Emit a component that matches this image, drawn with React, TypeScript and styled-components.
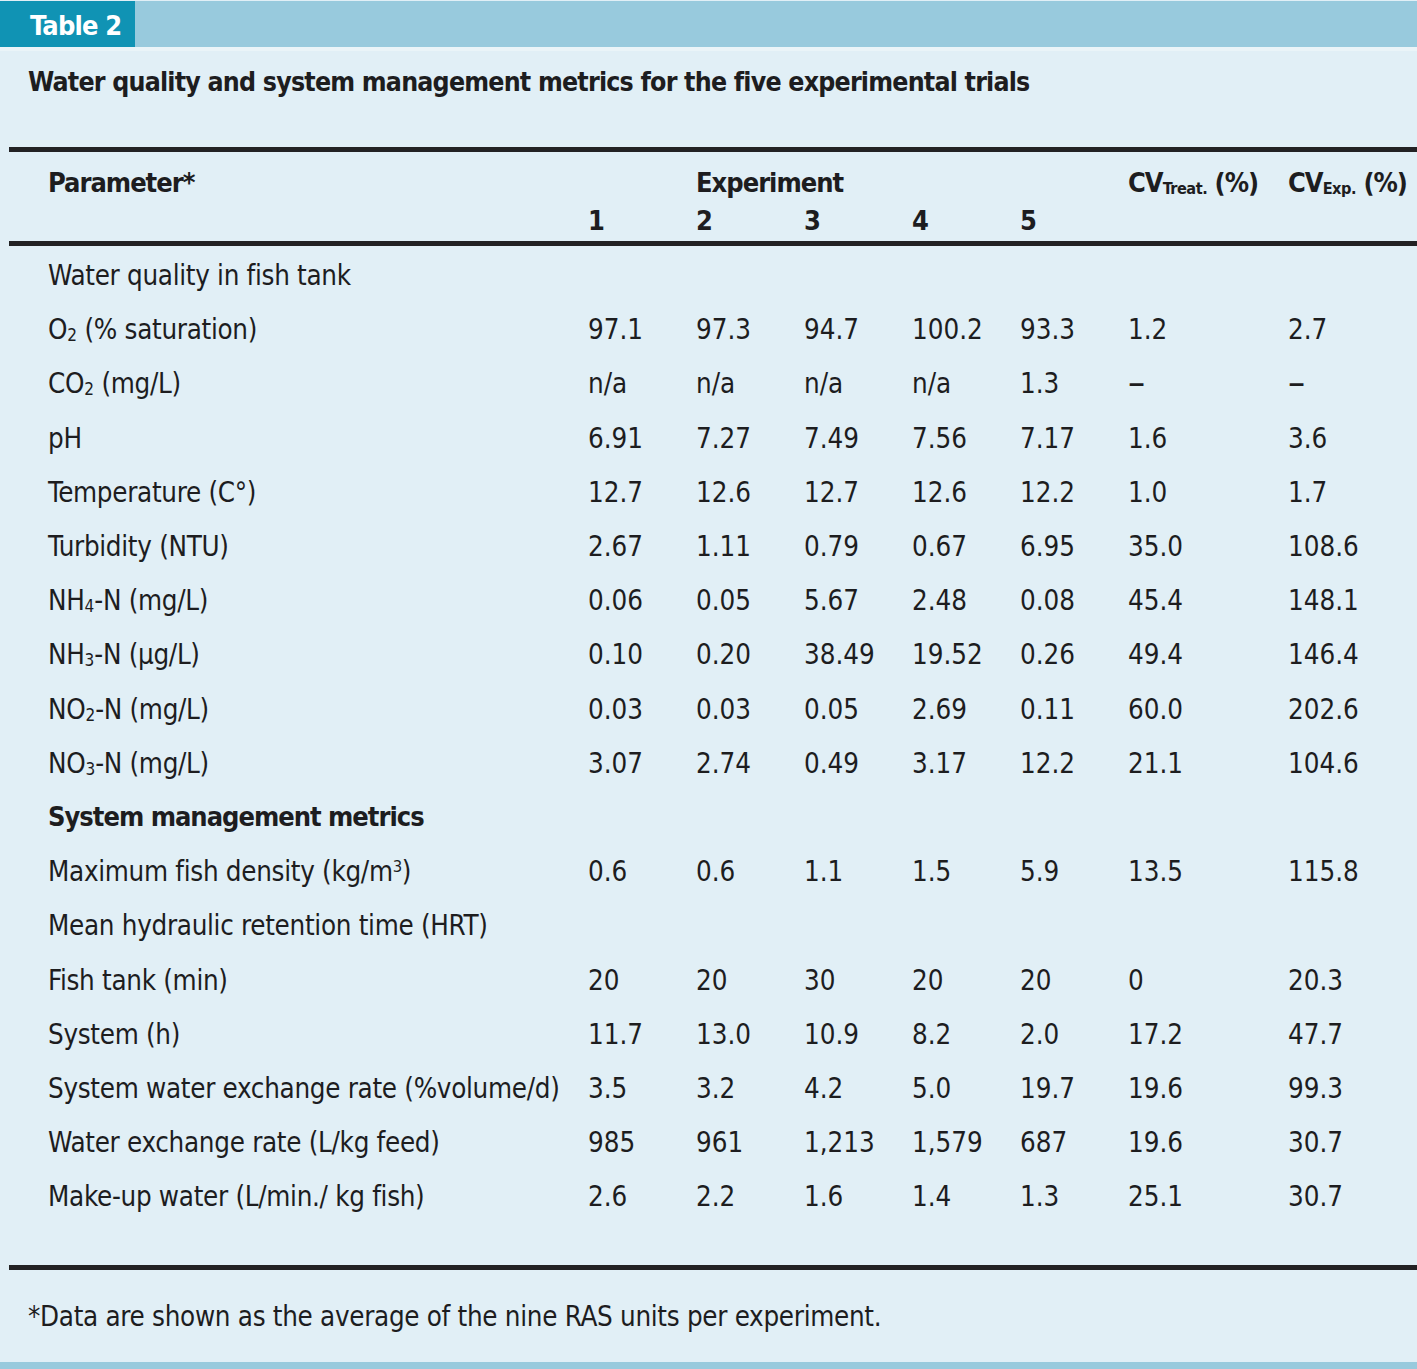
import React from "react";
import styled, { createGlobalStyle } from "styled-components";

const GlobalStyle = createGlobalStyle`
  html, body { margin: 0; padding: 0; }
  body {
    background: #e1eff6;
    font-family: "DejaVu Sans Condensed", "Liberation Sans Narrow", "Liberation Sans", sans-serif;
    color: #1d1d1f;
  }
`;

const Page = styled.div`
  width: 1417px;
  height: 1369px;
  background: #e1eff6;
  display: flex;
  flex-direction: column;
  overflow: hidden;
`;

const HeaderBar = styled.div`
  margin-top: 1px;
  height: 46px;
  background: #98cadd;
  display: flex;
  border-bottom: 4px solid #eaf4f8;
`;

const Tab = styled.div`
  width: 135px;
  background: #1093b4;
  color: #ffffff;
  font-weight: 700;
  font-size: 27px;
  letter-spacing: -0.8px;
  display: flex;
  align-items: center;
  padding: 2px 0 0 30px;
  box-sizing: border-box;
`;

const Title = styled.div`
  height: 96px;
  box-sizing: border-box;
  padding: 13px 0 0 28px;
  font-size: 26.5px;
  letter-spacing: -0.8px;
  font-weight: 700;
  line-height: 36px;
`;

const Rule = styled.div<{ $top?: number }>`
  margin-left: 9px;
  height: 5px;
  background: #222224;
  margin-top: ${(p) => p.$top ?? 0}px;
`;

const Grid = styled.div`
  margin-left: 9px;
  padding-left: 39px;
  display: grid;
  grid-template-columns: 540px repeat(5, 108px) 160px 1fr;
  font-size: 27.5px;
`;

const HeadGrid = styled(Grid)`
  height: 89px;
  grid-template-rows: 38px 37px;
  padding-top: 12px;
  box-sizing: border-box;
  font-weight: 700;
  font-size: 27px;
  letter-spacing: -1px;
  line-height: 38px;
`;

const HeadCell = styled.div<{ $col: number; $row: number; $span?: number }>`
  grid-column: ${(p) => p.$col} / span ${(p) => p.$span ?? 1};
  grid-row: ${(p) => p.$row};
  white-space: nowrap;
`;

const HeadSub = styled.sub`
  font-size: 0.6em;
  vertical-align: -0.15em;
  line-height: 0;
  letter-spacing: -0.5px;
`;

const Body = styled(Grid)`
  padding-top: 2px;
  grid-auto-rows: 54.2px;
  align-items: center;
  line-height: 34px;
`;

const Cell = styled.div`
  white-space: nowrap;
`;

const LabelCell = styled(Cell)`
  letter-spacing: -0.3px;
`;

const SectionCell = styled(Cell)<{ $bold?: boolean }>`
  grid-column: 1 / -1;
  font-weight: ${(p) => (p.$bold ? 700 : 400)};
  font-size: ${(p) => (p.$bold ? "27px" : "27.5px")};
  letter-spacing: ${(p) => (p.$bold ? "-1px" : "-0.3px")};
`;

const Dash = styled.span`
  font-size: 38px;
  line-height: 34px;
`;

const Sub = styled.sub`
  font-size: 0.62em;
  vertical-align: -0.12em;
  line-height: 0;
  letter-spacing: 0;
`;

const Sup = styled.sup`
  font-size: 0.6em;
  vertical-align: 0.55em;
  line-height: 0;
`;

const Footnote = styled.div`
  margin-top: 28px;
  padding-left: 28px;
  font-size: 27.5px;
  letter-spacing: -0.3px;
  line-height: 36px;
`;

const Spacer = styled.div`
  flex: 1;
`;

const BottomBar = styled.div`
  height: 7px;
  background: #98cadd;
`;

type Row =
  | { kind: "section"; label: React.ReactNode; bold?: boolean }
  | { kind: "data"; label: React.ReactNode; values: string[] };

const rows: Row[] = [
  { kind: "section", label: "Water quality in fish tank" },
  { kind: "data", label: <>O<Sub>2</Sub> (% saturation)</>, values: ["97.1", "97.3", "94.7", "100.2", "93.3", "1.2", "2.7"] },
  { kind: "data", label: <>CO<Sub>2</Sub> (mg/L)</>, values: ["n/a", "n/a", "n/a", "n/a", "1.3", "–", "–"] },
  { kind: "data", label: "pH", values: ["6.91", "7.27", "7.49", "7.56", "7.17", "1.6", "3.6"] },
  { kind: "data", label: "Temperature (C°)", values: ["12.7", "12.6", "12.7", "12.6", "12.2", "1.0", "1.7"] },
  { kind: "data", label: "Turbidity (NTU)", values: ["2.67", "1.11", "0.79", "0.67", "6.95", "35.0", "108.6"] },
  { kind: "data", label: <>NH<Sub>4</Sub>-N (mg/L)</>, values: ["0.06", "0.05", "5.67", "2.48", "0.08", "45.4", "148.1"] },
  { kind: "data", label: <>NH<Sub>3</Sub>-N (µg/L)</>, values: ["0.10", "0.20", "38.49", "19.52", "0.26", "49.4", "146.4"] },
  { kind: "data", label: <>NO<Sub>2</Sub>-N (mg/L)</>, values: ["0.03", "0.03", "0.05", "2.69", "0.11", "60.0", "202.6"] },
  { kind: "data", label: <>NO<Sub>3</Sub>-N (mg/L)</>, values: ["3.07", "2.74", "0.49", "3.17", "12.2", "21.1", "104.6"] },
  { kind: "section", label: "System management metrics", bold: true },
  { kind: "data", label: <>Maximum fish density (kg/m<Sup>3</Sup>)</>, values: ["0.6", "0.6", "1.1", "1.5", "5.9", "13.5", "115.8"] },
  { kind: "section", label: "Mean hydraulic retention time (HRT)" },
  { kind: "data", label: "Fish tank (min)", values: ["20", "20", "30", "20", "20", "0", "20.3"] },
  { kind: "data", label: "System (h)", values: ["11.7", "13.0", "10.9", "8.2", "2.0", "17.2", "47.7"] },
  { kind: "data", label: "System water exchange rate (%volume/d)", values: ["3.5", "3.2", "4.2", "5.0", "19.7", "19.6", "99.3"] },
  { kind: "data", label: "Water exchange rate (L/kg feed)", values: ["985", "961", "1,213", "1,579", "687", "19.6", "30.7"] },
  { kind: "data", label: "Make-up water (L/min./ kg fish)", values: ["2.6", "2.2", "1.6", "1.4", "1.3", "25.1", "30.7"] },
];

export default function App() {
  return (
    <Page>
      <GlobalStyle />
      <HeaderBar>
        <Tab>Table 2</Tab>
      </HeaderBar>
      <Title>Water quality and system management metrics for the five experimental trials</Title>
      <Rule />
      <HeadGrid>
        <HeadCell $col={1} $row={1}>Parameter*</HeadCell>
        <HeadCell $col={3} $row={1} $span={3}>Experiment</HeadCell>
        <HeadCell $col={7} $row={1}>CV<HeadSub>Treat.</HeadSub> (%)</HeadCell>
        <HeadCell $col={8} $row={1}>CV<HeadSub>Exp.</HeadSub> (%)</HeadCell>
        {[1, 2, 3, 4, 5].map((n) => (
          <HeadCell key={n} $col={n + 1} $row={2}>{n}</HeadCell>
        ))}
      </HeadGrid>
      <Rule />
      <Body>
        {rows.map((r, i) =>
          r.kind === "section" ? (
            <SectionCell key={i} $bold={r.bold}>{r.label}</SectionCell>
          ) : (
            <React.Fragment key={i}>
              <LabelCell>{r.label}</LabelCell>
              {r.values.map((v, j) => (
                <Cell key={j}>{v === "–" ? <Dash>–</Dash> : v}</Cell>
              ))}
            </React.Fragment>
          )
        )}
      </Body>
      <Rule $top={42} />
      <Footnote>*Data are shown as the average of the nine RAS units per experiment.</Footnote>
      <Spacer />
      <BottomBar />
    </Page>
  );
}
